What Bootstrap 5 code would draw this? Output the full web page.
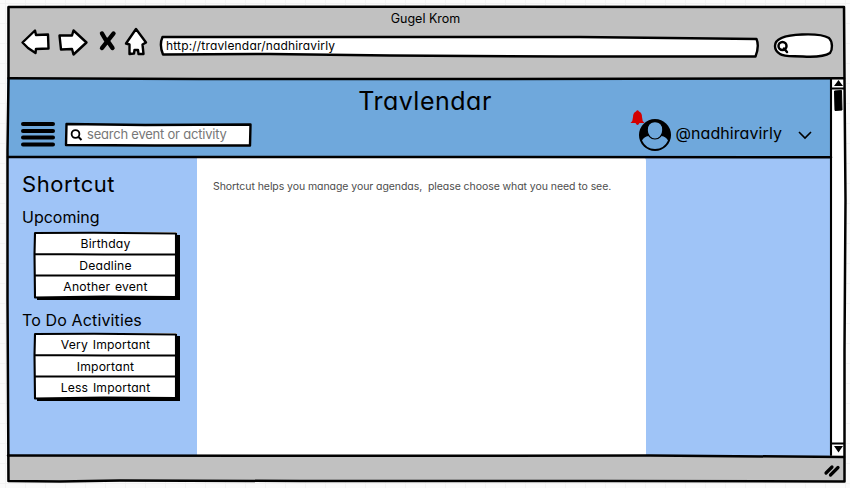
<!DOCTYPE html>
<html lang="en">
<head>
<meta charset="utf-8">
<meta name="viewport" content="width=device-width, initial-scale=1">
<title>Travlendar</title>
<link href="https://cdn.jsdelivr.net/npm/bootstrap@5.3.0/dist/css/bootstrap.min.css" rel="stylesheet">
<style>
body{width:850px;height:488px;overflow:hidden;color:#000;font-family:Inter,"Open Sans","Liberation Sans",sans-serif;font-feature-settings:"cv11" 1;font-size:12px;line-height:16px;background:#fafafa;
background-image:linear-gradient(90deg,#f2f2f2 1px,transparent 1px),linear-gradient(#f2f2f2 1px,transparent 1px);background-size:20px 20px;background-position:5px 3px}
.window-box{width:838px;height:475px;margin:7px 0 0 7px}
.ink{fill:none;stroke:#000;stroke-width:2.5;stroke-linejoin:round;stroke-linecap:round}
.ink.fine{stroke-width:2.1}
.white-ink{fill:#fff;stroke:#000;stroke-width:2.4;stroke-linejoin:round;stroke-linecap:round}
svg{display:block;overflow:visible;flex:none}
.frame-lines{left:0;top:0;pointer-events:none}
.chrome-bar{height:72px;background:#c1c1c1}
.window-title{height:16px;padding:4px 1px 0 0;font-size:12.5px}
.tools{padding:7px 12px 0 15px}
.address-box{width:598px;height:20px;margin-left:14px}
.address-text{left:6px;top:4px;font-size:12px;letter-spacing:.17px}
.viewport-row{height:377px}
.app-head{height:78px;background:#6fa8dc}
.app-title{font-size:25px;line-height:30px;padding:7px 0 0 13px;height:38px;letter-spacing:.5px}
.search-box{width:186px;height:24px;margin:6px 0 0 11px}
.search-text{left:22px;top:3px;color:#777;font-size:13px;letter-spacing:-.22px}
.menu-icon{margin-top:4px}
.user-area{padding-right:18px}
.avatar-wrap{margin-top:2px}
.user-name{font-size:16px;line-height:20px;margin:6px 16px 0 4px;letter-spacing:.08px}
.chev{margin-top:14px}
.bell{left:-9px;top:-9px}
.side-panel{width:190px;padding:14px 0 0 15px}
.content-row{background:#9fc4f7;height:299px}
.main-panel{width:449px;background:#fff;border-radius:0 4px 0 0;padding:22px 0 0 16px;color:#4d4d4d;font-size:10.5px;letter-spacing:-.066px}
.side-title{font-size:22px;line-height:26px;letter-spacing:.55px}
.group-title{font-size:16px;line-height:20px}
.up-title{margin:10px 0 5px}
.todo-title{margin:13px 0 3px;letter-spacing:.13px}
.menu-box{width:143px;height:65px;margin-left:12px;background:#fff;box-shadow:3px 3px 0 #000;font-size:12.2px;letter-spacing:.16px;word-spacing:1.2px}
.menu-item{height:21.6px;line-height:23px}
.scroll-col{width:15px;background:#fff}
.status-bar{height:26px;background:#c1c1c1}
</style>
<script src="https://cdn.jsdelivr.net/npm/bootstrap@5.3.0/dist/js/bootstrap.bundle.min.js"></script>
</head>
<body class="position-relative">
<div class="window-box d-flex flex-column">
  <header class="chrome-bar">
    <div class="window-title text-center">Gugel Krom</div>
    <div class="tools d-flex align-items-start">
      <svg width="124" height="28" viewBox="22 30 124 28" aria-label="Browser navigation">
        <path class="white-ink" d="M22.500 42.500L35 30.500L36 35L48 34.500L48.500 48.500L36 49L35.500 53L28 48Z"/>
        <path class="white-ink" d="M59.500 35.500L72 35.500L73.500 30.500L86.500 42.500L73.500 54.500L72 49L61 49.500Z"/>
        <path d="M102 33.500L107 42M113.500 33.500L102 48M107 40L112.500 48" fill="none" stroke="#000" stroke-width="4.400" stroke-linecap="round"/>
        <path class="white-ink" d="M136 29L146 42.500L142.500 44.500L143.500 54L138.500 54L138 50L134.500 50L134 53.500L129.500 54L129.500 44.500L126 43.500Z"/>
      </svg>
      <div class="address-box position-relative mt-1">
        <svg class="position-absolute top-0 start-0" width="598" height="20"><path class="white-ink" d="M2.500 3L200 3L420 3L596.500 5Q599.500 12 595.500 22.500L400 22.500L230 21.500L110 20L3 20.500Q-1 11 2.500 3Z"/></svg>
        <span class="address-text position-absolute text-nowrap">http://travlendar/nadhiravirly</span>
      </div>
      <svg class="ms-auto" width="59" height="28" viewBox="774 30 59 28" aria-label="Search">
        <path class="white-ink" d="M775 46C775 38 787 35 802 34.500C814 34 824 35 829 38C833 42 832.500 50 830 53C824 57 813 57 803 56.500C791 56 784 57 780 54Q775 51 775 46Z"/>
        <circle class="ink" cx="782.500" cy="46" r="4"/><path class="ink" d="M784 48.500L787 52"/>
      </svg>
    </div>
  </header>
  <div class="viewport-row d-flex">
    <div class="flex-grow-1">
      <div class="app-head">
        <div class="app-title text-center">Travlendar</div>
        <div class="d-flex align-items-start ps-3">
          <svg class="menu-icon" width="31" height="26" viewBox="23 121 31 26" aria-label="Menu"><path d="M23 124H53M23 131H53M23 137.500H53M23 144.500H53" stroke="#000" stroke-width="4" stroke-linecap="round"/></svg>
          <div class="search-box position-relative">
            <svg class="position-absolute top-0 start-0" width="186" height="24"><path class="white-ink" d="M1.500 1L80 2L185.500 1.500L185 22.500L90 22.500L1 22Z"/><circle cx="10.500" cy="11" r="3.900" fill="none" stroke="#000" stroke-width="1.800"/><path d="M13.500 14L16.500 17" stroke="#000" stroke-width="2"/></svg>
            <span class="search-text position-absolute text-nowrap">search event or activity</span>
          </div>
          <div class="user-area d-flex ms-auto align-items-start">
            <div class="avatar-wrap position-relative">
              <svg width="32" height="32" viewBox="0 0 32 32" aria-label="Profile"><circle cx="16" cy="16" r="16"/><path d="M3 21.500Q5 17.500 9.500 17Q16 22.500 22.500 17Q27 17.500 29 21.500Q25 30 16 30T3 21.500Z" fill="#6fa8dc"/><path d="M16 2.700C10.500 2.700 8.200 6.500 8.200 11C8.200 16.500 12 20 16 20S23.800 16.500 23.800 11C23.800 6.500 21.500 2.700 16 2.700Z" fill="#6fa8dc" stroke="#000" stroke-width="1.200"/></svg>
              <svg class="bell position-absolute" width="15" height="16" viewBox="0 0 15 16" fill="#d40000"><path d="M6 1.500Q7.500-1 9 1.500Q12 2.500 12 7Q12 11 14.500 13H9.500Q7.500 17 5.500 13H.5Q3 11 3 7Q3 2.500 6 1.500Z"/></svg>
            </div>
            <span class="user-name text-nowrap">@nadhiravirly</span>
            <svg class="chev" width="14" height="8" viewBox="0 0 14 8"><path d="M1 1L7 7L13 1" fill="none" stroke="#000" stroke-width="1.600"/></svg>
          </div>
        </div>
      </div>
      <div class="content-row d-flex">
        <aside class="side-panel">
          <div class="side-title">Shortcut</div>
          <div class="group-title up-title">Upcoming</div>
          <div class="menu-box position-relative text-center">
            <svg class="position-absolute top-0 start-0" width="143" height="65"><path class="ink fine" d="M1 1L60 .8L142 1.500L142 65L70 64.500L1 65.500L.5 22L1 1M1 22L70 22.500L142 22.500M1 43.500L142 43.500"/></svg>
            <div class="menu-item">Birthday</div><div class="menu-item">Deadline</div><div class="menu-item">Another event</div>
          </div>
          <div class="group-title todo-title">To Do Activities</div>
          <div class="menu-box position-relative text-center">
            <svg class="position-absolute top-0 start-0" width="143" height="65"><path class="ink fine" d="M1 1L60 .8L142 1.500L142 65L70 64.500L1 65.500L.5 22L1 1M1 22L70 22.500L142 22.500M1 43.500L142 43.500"/></svg>
            <div class="menu-item">Very Important</div><div class="menu-item">Important</div><div class="menu-item">Less Important</div>
          </div>
        </aside>
        <main class="main-panel text-nowrap">Shortcut helps you manage your agendas,&nbsp; please choose what you need to see.</main>
      </div>
    </div>
    <div class="scroll-col">
      <svg width="15" height="377" viewBox="830 79 15 377" aria-label="Scrollbar"><path d="M834 86L838.500 80L843 86ZM834 446H843L838.500 452.500Z"/><path d="M831 88.500H845M831 443.500H845" stroke="#000" stroke-width="2"/><path d="M834.500 91L841.500 90.500L842 110L835 110.500Z" stroke="#000" stroke-linejoin="round"/></svg>
    </div>
  </div>
  <footer class="status-bar"></footer>
</div>
<svg class="frame-lines position-absolute" width="850" height="488" aria-hidden="true">
  <path class="ink" d="M8.500 7L400 6.800L844 7L844.500 80L845.500 200L844.500 350L844.500 481.500L600 481L300 481L120 480.500L60 481.500L8.500 481L7.500 300L7.500 150L8.500 80Z"/>
  <path class="ink" d="M8.500 78.200L200 79L500 79L844 78.300M8 157L300 157L831 157.200M8 455.500L400 455.800L650 455.500L844 457"/>
  <path class="ink fine" d="M831 79L831 250L831 455"/>
  <path d="M826 473L832 467M830.500 475L838 467.500" stroke="#000" stroke-width="3.200" stroke-linecap="round"/>
</svg>
</body>
</html>
